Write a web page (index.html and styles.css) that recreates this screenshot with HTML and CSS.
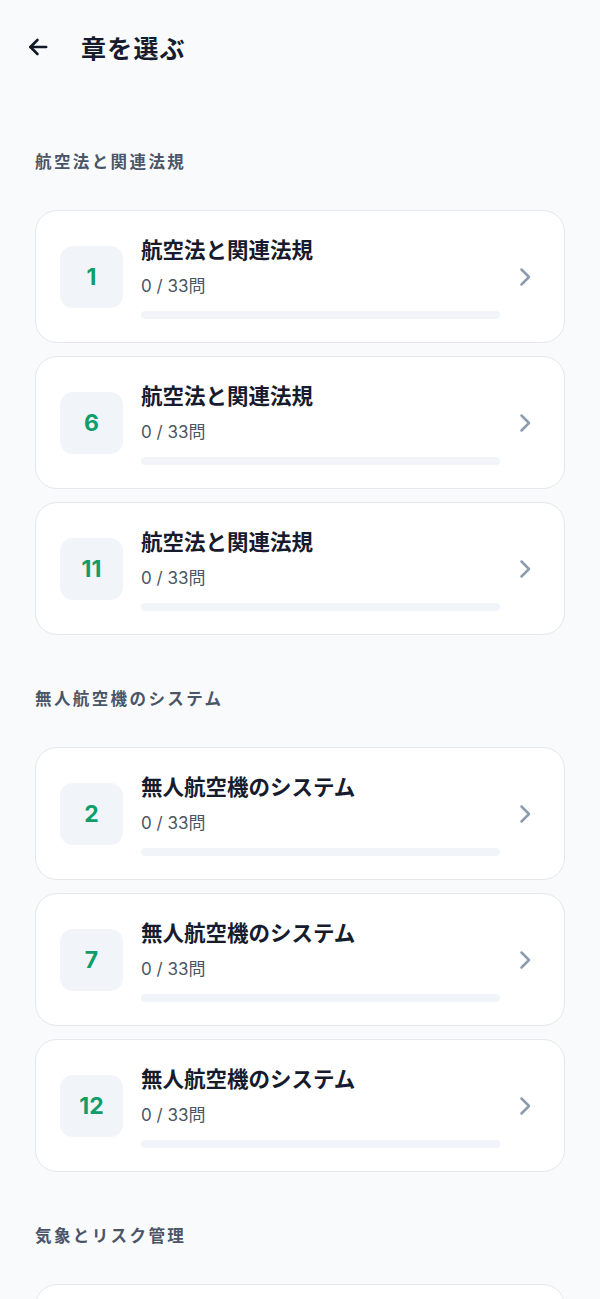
FILE: index.html
```html
<!DOCTYPE html>
<html lang="ja">
<head>
  <meta charset="UTF-8" />
  <title>章を選ぶ</title>
  <link rel="stylesheet" href="styles.css">
</head>
<body>
  <header class="topbar">
    <button class="back" aria-label="戻る">
      <svg width="26" height="26" viewBox="0 0 24 24" fill="none" stroke="#111827" stroke-width="2.4" stroke-linecap="round" stroke-linejoin="round"><path d="M19.5 12H5"/><path d="M11.5 18.5L5 12l6.5-6.5"/></svg>
    </button>
    <h1>章を選ぶ</h1>
  </header>

  <main>
    <section class="group">
      <h2>航空法と関連法規</h2>
      <div class="list">
        <a class="card"><div class="num">1</div><div class="info"><div class="title">航空法と関連法規</div><div class="count">0 / 33問</div><div class="bar"></div></div><svg class="chev" width="24" height="24" viewBox="0 0 24 24" fill="none" stroke="#8c9bb0" stroke-width="2.5" stroke-linecap="round" stroke-linejoin="round"><path d="M8.5 4.5l7.5 7.5-7.5 7.5"/></svg></a>
        <a class="card"><div class="num">6</div><div class="info"><div class="title">航空法と関連法規</div><div class="count">0 / 33問</div><div class="bar"></div></div><svg class="chev" width="24" height="24" viewBox="0 0 24 24" fill="none" stroke="#8c9bb0" stroke-width="2.5" stroke-linecap="round" stroke-linejoin="round"><path d="M8.5 4.5l7.5 7.5-7.5 7.5"/></svg></a>
        <a class="card"><div class="num">11</div><div class="info"><div class="title">航空法と関連法規</div><div class="count">0 / 33問</div><div class="bar"></div></div><svg class="chev" width="24" height="24" viewBox="0 0 24 24" fill="none" stroke="#8c9bb0" stroke-width="2.5" stroke-linecap="round" stroke-linejoin="round"><path d="M8.5 4.5l7.5 7.5-7.5 7.5"/></svg></a>
      </div>
    </section>

    <section class="group">
      <h2>無人航空機のシステム</h2>
      <div class="list">
        <a class="card"><div class="num">2</div><div class="info"><div class="title">無人航空機のシステム</div><div class="count">0 / 33問</div><div class="bar"></div></div><svg class="chev" width="24" height="24" viewBox="0 0 24 24" fill="none" stroke="#8c9bb0" stroke-width="2.5" stroke-linecap="round" stroke-linejoin="round"><path d="M8.5 4.5l7.5 7.5-7.5 7.5"/></svg></a>
        <a class="card"><div class="num">7</div><div class="info"><div class="title">無人航空機のシステム</div><div class="count">0 / 33問</div><div class="bar"></div></div><svg class="chev" width="24" height="24" viewBox="0 0 24 24" fill="none" stroke="#8c9bb0" stroke-width="2.5" stroke-linecap="round" stroke-linejoin="round"><path d="M8.5 4.5l7.5 7.5-7.5 7.5"/></svg></a>
        <a class="card"><div class="num">12</div><div class="info"><div class="title">無人航空機のシステム</div><div class="count">0 / 33問</div><div class="bar"></div></div><svg class="chev" width="24" height="24" viewBox="0 0 24 24" fill="none" stroke="#8c9bb0" stroke-width="2.5" stroke-linecap="round" stroke-linejoin="round"><path d="M8.5 4.5l7.5 7.5-7.5 7.5"/></svg></a>
      </div>
    </section>

    <section class="group">
      <h2>気象とリスク管理</h2>
      <div class="list">
        <a class="card"><div class="num">3</div><div class="info"><div class="title">気象とリスク管理</div><div class="count">0 / 33問</div><div class="bar"></div></div><svg class="chev" width="24" height="24" viewBox="0 0 24 24" fill="none" stroke="#8c9bb0" stroke-width="2.5" stroke-linecap="round" stroke-linejoin="round"><path d="M8.5 4.5l7.5 7.5-7.5 7.5"/></svg></a>
      </div>
    </section>
  </main>
</body>
</html>
```

FILE: styles.css
```css
body { margin: 0; background: #f9fafb; font-family: Inter, "Noto Sans CJK JP", sans-serif; color: #111827; }
.topbar { display: flex; align-items: center; height: 46px; padding: 24px 26px 28px; }
.back { display: flex; padding: 0; border: none; background: none; margin-left: -1px; }
.topbar h1 { margin: 0 0 0 30px; font-size: 25px; font-weight: 700; letter-spacing: 1.2px; color: #161b2e; }
main { padding: 0 35px 40px; }
.group { padding-top: 52px; }
.group h2 { margin: 0 0 36px; font-size: 16.5px; line-height: 24px; font-weight: 700; color: #4a5568; letter-spacing: 2.4px; }
.list { display: flex; flex-direction: column; gap: 13px; }
.card { display: flex; align-items: center; height: 131px; padding: 0 27px 0 24px; background: #fff; border: 1px solid #e5e7eb; border-radius: 22px; }
.num { width: 63px; height: 62px; flex: none; display: flex; align-items: center; justify-content: center; background: #f1f5f9; border-radius: 13px; color: #0f9d6a; font-size: 23px; font-weight: 700; }
.info { flex: 1; margin: 0 13px 0 18px; padding-top: 2px; }
.title { font-size: 21.5px; line-height: 26px; font-weight: 700; color: #161b2e; }
.count { margin-top: 12px; font-size: 17px; line-height: 22px; color: #4b5563; }
.bar { margin-top: 14px; height: 8px; border-radius: 4px; background: #f1f5f9; }
.chev { flex: none; }
```
